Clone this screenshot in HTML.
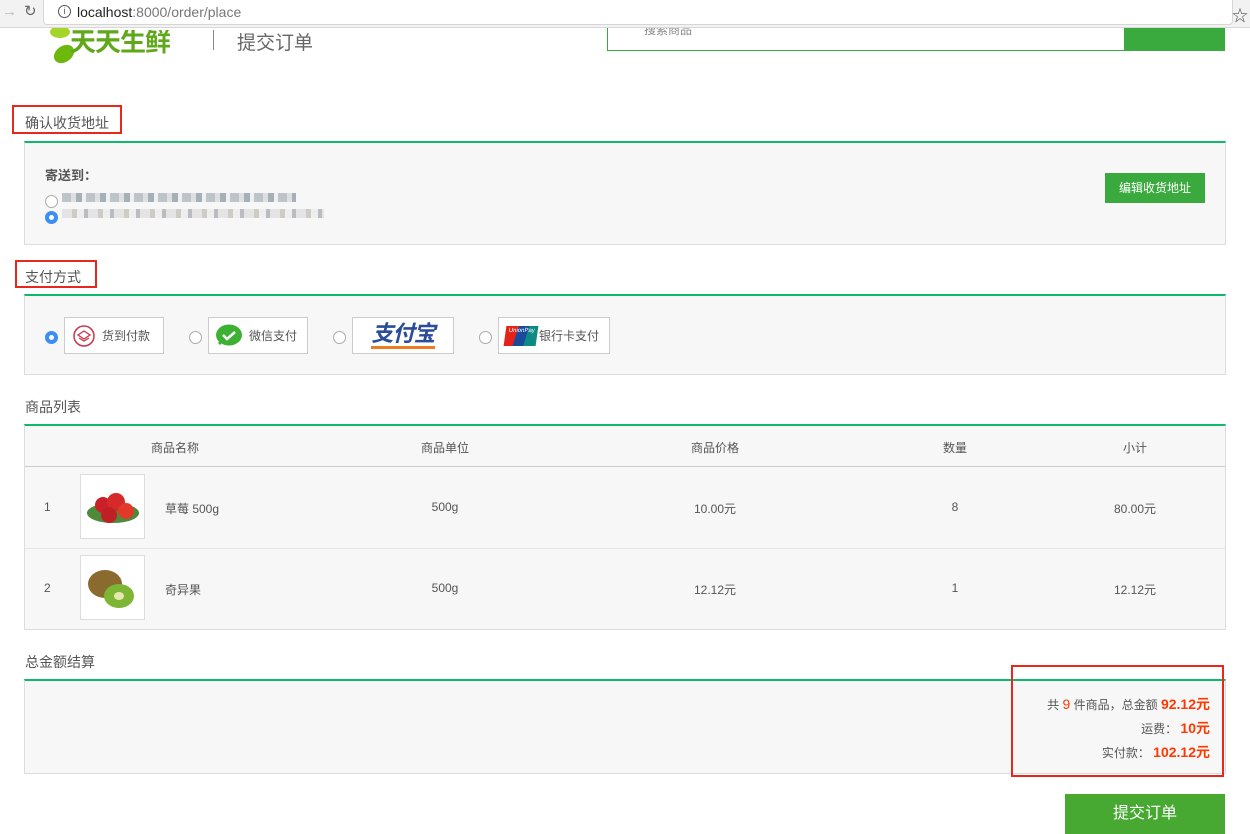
<!DOCTYPE html>
<html><head><meta charset="utf-8"><style>
*{margin:0;padding:0;box-sizing:border-box}
body{width:1250px;height:828px;overflow:hidden;background:#fff;font-family:"Liberation Sans","Noto Sans CJK SC",sans-serif;color:#666;font-size:12px;position:relative}
.a{position:absolute}
.chrome{left:0;top:0;width:1250px;height:28px;background:#f2f2f2;border-bottom:1px solid #d8d8d8}
.url{left:43px;top:0;width:1190px;height:25px;background:#fff;border:1px solid #d6d6d6;border-top:none;border-radius:0 0 4px 4px}
.box{left:24px;width:1202px;background:#f7f7f7;border:1px solid #ddd;border-top:2px solid #10b86b}
.t{font-size:14px;color:#555}
.red{border:2px solid #e8281c}
.rad{width:13px;height:13px;border-radius:50%;border:1px solid #aaa;background:#fff}
.rad.on{border:4px solid #3a8ef6;background:#fff}
.pay{height:37px;top:317px;background:#fff;border:1px solid #ccc;font-size:12px;color:#555;display:flex;align-items:center}
.c{text-align:center;font-size:12px;color:#555}
.btn{background:#3aaa3f;color:#fff}
.num{color:#ff3700;font-weight:bold;font-size:14px}
</style></head><body>
<svg class="a" style="left:44px;top:26px" width="40" height="40"><ellipse cx="20" cy="28" rx="11" ry="8" fill="#6db80d" transform="rotate(-35 20 28)"/><ellipse cx="16" cy="6" rx="10" ry="6" fill="#a6d52a"/></svg>
<div class="a" style="left:70px;top:30px;font-size:26px;font-weight:bold;color:#5fa81a;line-height:24px;letter-spacing:-1px;height:24px;overflow:hidden">天天生鲜</div>
<div class="a chrome"></div>
<div class="a" style="left:2px;top:3px;color:#bbb;font-size:15px">→</div>
<div class="a" style="left:24px;top:2px;color:#666;font-size:15px">↻</div>
<div class="a url"></div>
<div class="a" style="left:58px;top:5px;width:13px;height:13px;border:1.3px solid #555;border-radius:50%;font-size:9px;text-align:center;line-height:11px;color:#555">i</div>
<div class="a" style="left:77px;top:4px;font-size:14px;color:#222">localhost<span style="color:#777">:8000/order/place</span></div>
<div class="a" style="left:1232px;top:2px;font-size:16px;color:#555">☆</div>

<div class="a" style="left:213px;top:30px;width:1px;height:20px;background:#888"></div>
<div class="a" style="left:237px;top:28px;font-size:19px;color:#666">提交订单</div>
<div class="a" style="left:607px;top:28px;width:518px;height:23px;border:1px solid #37ab40;border-top:none;background:#fff"></div>
<div class="a" style="left:644px;top:28px;font-size:12px;color:#888;height:8px;overflow:hidden;line-height:4px">搜索商品</div>
<div class="a btn" style="left:1124px;top:28px;width:101px;height:23px"></div>

<div class="a red" style="left:12px;top:105px;width:110px;height:29px"></div>
<div class="a t" style="left:25px;top:113px">确认收货地址</div>
<div class="a box" style="top:141px;height:104px"></div>
<div class="a" style="left:45px;top:165px;font-size:13px;font-weight:bold;color:#555">寄送到：</div>
<div class="a rad" style="left:45px;top:195px"></div>
<div class="a rad on" style="left:45px;top:211px"></div>
<div class="a" style="left:62px;top:193px;width:234px;height:9px;background:repeating-linear-gradient(90deg,#bfc4ca 0 9px,#dde0e3 9px 14px,#a7afb8 14px 20px,#eef0f2 20px 24px)"></div>
<div class="a" style="left:62px;top:209px;width:262px;height:9px;background:repeating-linear-gradient(90deg,#e4e4e4 0 10px,#cfcbc5 10px 15px,#eee 15px 22px,#b9bcc0 22px 26px)"></div>
<div class="a btn" style="left:1105px;top:173px;width:100px;height:30px;font-size:12px;line-height:30px;text-align:center">编辑收货地址</div>

<div class="a red" style="left:15px;top:260px;width:82px;height:28px"></div>
<div class="a t" style="left:25px;top:267px">支付方式</div>
<div class="a box" style="top:294px;height:81px"></div>
<div class="a rad on" style="left:45px;top:331px"></div>
<div class="a pay" style="left:64px;width:100px"><svg style="margin:0 6px 0 7px" width="24" height="24"><circle cx="12" cy="12" r="10" fill="none" stroke="#c8364a" stroke-width="1.5"/><path d="M6 11l6-4 6 4-6 4z M7 14l5 3 5-3" fill="none" stroke="#c8364a" stroke-width="1.3"/></svg>货到付款</div>
<div class="a rad" style="left:189px;top:331px"></div>
<div class="a pay" style="left:208px;width:100px"><svg style="margin:0 6px 0 6px" width="28" height="24"><ellipse cx="14" cy="11" rx="13" ry="10.5" fill="#3db134"/><path d="M4 20l4-4" stroke="#3db134" stroke-width="3"/><path d="M8 11l4 4 8-7" fill="none" stroke="#fff" stroke-width="2.5"/></svg>微信支付</div>
<div class="a rad" style="left:333px;top:331px"></div>
<div class="a pay" style="left:352px;width:102px;justify-content:center"><span style="font-size:22px;font-weight:bold;color:#2b4c9a;font-style:italic;letter-spacing:-1px;border-bottom:3px solid #ef7b20;line-height:24px">支付宝</span></div>
<div class="a rad" style="left:479px;top:331px"></div>
<div class="a pay" style="left:498px;width:112px"><div style="width:32px;height:20px;margin:0 2px 0 6px;background:linear-gradient(100deg,#e2231a 0 35%,#1a4a9c 35% 65%,#0d8a83 65%);transform:skewX(-8deg);color:#fff;font-size:6px;line-height:10px;text-align:center">UnionPay</div>银行卡支付</div>

<div class="a t" style="left:25px;top:397px">商品列表</div>
<div class="a box" style="top:424px;height:206px"></div>
<div class="a" style="left:25px;top:466px;width:1200px;height:1px;background:#ccc"></div>
<div class="a" style="left:25px;top:548px;width:1200px;height:1px;background:#e6e6e6"></div>
<div class="a c" style="left:125px;top:439px;width:100px">商品名称</div>
<div class="a c" style="left:395px;top:439px;width:100px">商品单位</div>
<div class="a c" style="left:665px;top:439px;width:100px">商品价格</div>
<div class="a c" style="left:905px;top:439px;width:100px">数量</div>
<div class="a c" style="left:1085px;top:439px;width:100px">小计</div>

<div class="a c" style="left:44px;top:500px">1</div>
<div class="a" style="left:80px;top:474px;width:65px;height:65px;background:#fff;border:1px solid #ddd"><svg width="63" height="63"><ellipse cx="32" cy="38" rx="26" ry="10" fill="#4e8a3a"/><circle cx="22" cy="30" r="8" fill="#c9202a"/><circle cx="35" cy="27" r="9" fill="#d42a2a"/><circle cx="45" cy="36" r="8" fill="#e23a2a"/><circle cx="28" cy="40" r="8" fill="#c01f24"/></svg></div>
<div class="a" style="left:165px;top:500px;font-size:12px;color:#555">草莓 500g</div>
<div class="a c" style="left:395px;top:500px;width:100px">500g</div>
<div class="a c" style="left:665px;top:500px;width:100px">10.00元</div>
<div class="a c" style="left:905px;top:500px;width:100px">8</div>
<div class="a c" style="left:1085px;top:500px;width:100px">80.00元</div>

<div class="a c" style="left:44px;top:581px">2</div>
<div class="a" style="left:80px;top:555px;width:65px;height:65px;background:#fff;border:1px solid #ddd"><svg width="63" height="63"><ellipse cx="24" cy="28" rx="17" ry="14" fill="#8a6a2e"/><ellipse cx="38" cy="40" rx="15" ry="12" fill="#7db534"/><ellipse cx="38" cy="40" rx="5" ry="4" fill="#e8e6b0"/></svg></div>
<div class="a" style="left:165px;top:581px;font-size:12px;color:#555">奇异果</div>
<div class="a c" style="left:395px;top:581px;width:100px">500g</div>
<div class="a c" style="left:665px;top:581px;width:100px">12.12元</div>
<div class="a c" style="left:905px;top:581px;width:100px">1</div>
<div class="a c" style="left:1085px;top:581px;width:100px">12.12元</div>

<div class="a t" style="left:25px;top:652px">总金额结算</div>
<div class="a box" style="top:679px;height:95px"></div>
<div class="a" style="left:900px;top:694px;width:310px;text-align:right;color:#555;font-size:12px">共 <span style="color:#ff3700;font-size:14px">9</span> 件商品，总金额 <span class="num">92.12元</span></div>
<div class="a" style="left:900px;top:718px;width:310px;text-align:right;color:#555;font-size:12px">运费： <span class="num">10元</span></div>
<div class="a" style="left:900px;top:742px;width:310px;text-align:right;color:#555;font-size:12px">实付款： <span class="num">102.12元</span></div>
<div class="a red" style="left:1011px;top:665px;width:213px;height:112px"></div>
<div class="a btn" style="left:1065px;top:794px;width:160px;height:40px;font-size:16px;line-height:40px;text-align:center;background:#47a832">提交订单</div>
</body></html>
